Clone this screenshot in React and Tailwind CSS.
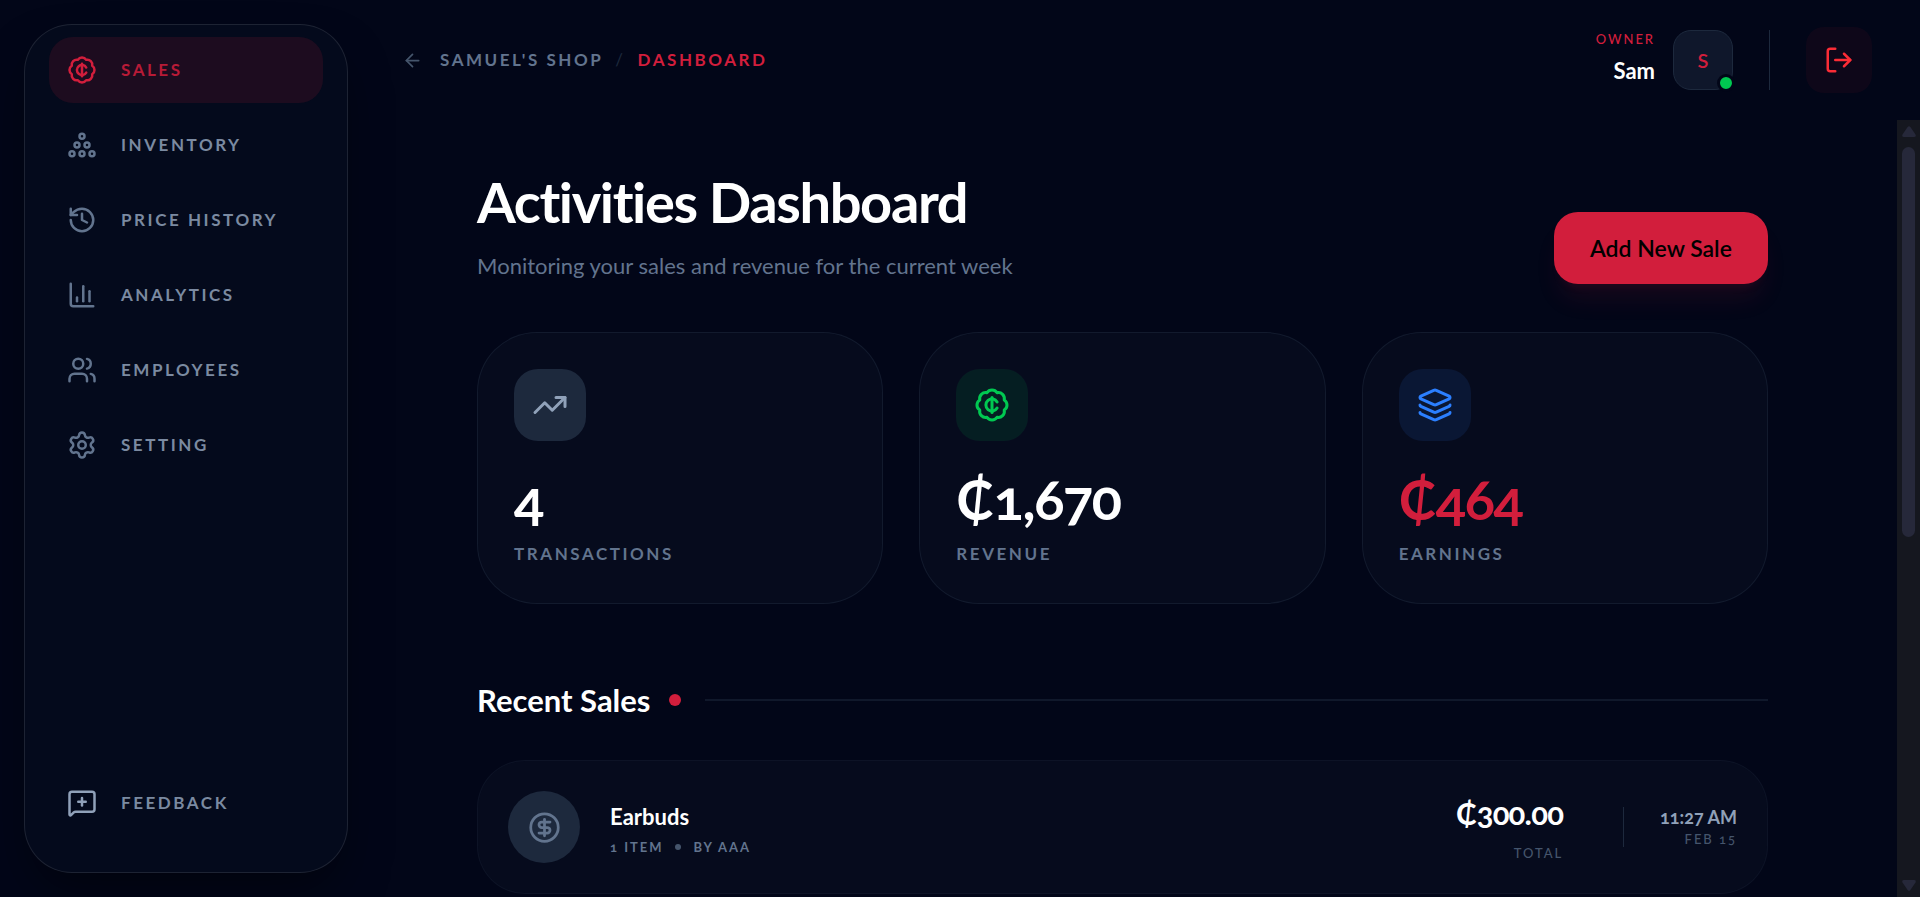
import React, { useState } from 'react';
import {
  ArrowLeft,
  BadgeCent,
  ChartColumn,
  CircleDollarSign,
  History,
  Layers,
  LogOut,
  MessageSquarePlus,
  Settings,
  TrendingUp,
  Users
} from 'lucide-react';

// Pyramid of six rings
const PileIcon = ({ size = 24 }) => (
  <svg width={size} height={size} viewBox="0 0 24 24" fill="none" stroke="currentColor" strokeWidth="2" aria-hidden="true">
    <circle cx="12" cy="5" r="2" />
    <circle cx="8" cy="12" r="2" />
    <circle cx="16" cy="12" r="2" />
    <circle cx="4" cy="19" r="2" />
    <circle cx="12" cy="19" r="2" />
    <circle cx="20" cy="19" r="2" />
  </svg>
);

const NAV_ITEMS = [
  { label: 'Sales', icon: BadgeCent },
  { label: 'Inventory', icon: PileIcon },
  { label: 'Price History', icon: History },
  { label: 'Analytics', icon: ChartColumn },
  { label: 'Employees', icon: Users },
  { label: 'Setting', icon: Settings }
];

const STATS = [
  { label: 'Transactions', value: '4', icon: TrendingUp, box: 'bg-slate-800 text-slate-400', text: 'text-white' },
  { label: 'Revenue', value: '₵1,670', icon: BadgeCent, box: 'bg-green-500/10 text-green-500', text: 'text-white' },
  { label: 'Earnings', value: '₵464', icon: Layers, box: 'bg-blue-500/10 text-blue-500', text: 'text-[#d21e3c]' }
];

const SALES = [
  { id: 1, name: 'Earbuds', items: '1 Item', seller: 'By AAA', total: '₵300.00', time: '11:27 AM', date: 'Feb 15' }
];

const NavItem = ({ label, icon: Icon, active, iconColor = 'text-slate-500', onClick }) => (
  <a
    href="#"
    onClick={onClick}
    className={`flex items-center gap-6 p-[18px] rounded-3xl transition-colors ${
      active ? 'bg-[#d21e3c]/12 text-[#d21e3c]' : 'text-slate-400 hover:bg-white/5'
    }`}
  >
    <span className={active ? '' : iconColor}>
      <Icon size={30} />
    </span>
    <span className="text-[17px] leading-6 font-bold uppercase tracking-[0.15em] opacity-85">{label}</span>
  </a>
);

const Sidebar = () => {
  const [current, setCurrent] = useState('Sales');

  return (
    <aside className="shrink-0 py-6 pl-6">
      <div className="flex flex-col justify-between h-full w-[324px] px-6 pt-3 pb-9 rounded-[48px] border border-white/10 bg-[#040a1c] shadow-2xl shadow-black/50">
        <nav className="flex flex-col gap-[9px]">
          {NAV_ITEMS.map((item) => (
            <NavItem
              key={item.label}
              label={item.label}
              icon={item.icon}
              active={current === item.label}
              onClick={() => setCurrent(item.label)}
            />
          ))}
        </nav>
        <NavItem label="Feedback" icon={MessageSquarePlus} iconColor="text-slate-400" />
      </div>
    </aside>
  );
};

const Header = () => (
  <header className="shrink-0 h-[120px] px-12 flex items-center justify-between">
    <div className="flex items-center gap-3">
      <button aria-label="Go back" className="w-8 h-8 flex items-center justify-center text-slate-600">
        <ArrowLeft size={21} />
      </button>
      <div className="flex items-center gap-3 text-[17px] leading-6 font-bold uppercase tracking-[0.15em]">
        <a href="#" className="text-slate-500">Samuel's Shop</a>
        <span className="font-normal text-slate-800">/</span>
        <span className="text-[#d21e3c]">Dashboard</span>
      </div>
    </div>

    <div className="flex items-center gap-9">
      <div className="flex items-center gap-[18px]">
        <div className="pb-1.5 text-right">
          <p className="text-[13px] leading-5 font-medium uppercase tracking-[0.15em] text-[#d21e3c]">Owner</p>
          <p className="mt-2 text-[22px] leading-7 font-bold text-white">Sam</p>
        </div>
        <div className="relative w-[60px] h-[60px] flex items-center justify-center rounded-[18px] border border-slate-800 bg-slate-900 text-xl font-semibold text-[#d21e3c]">
          S
          <span className="absolute -right-[3px] -bottom-[3px] w-[18px] h-[18px] rounded-full border-3 border-slate-950 bg-green-500"></span>
        </div>
      </div>
      <div className="w-px h-[60px] bg-slate-800"></div>
      <button aria-label="Log out" className="w-[66px] h-[66px] flex items-center justify-center rounded-[18px] bg-red-500/5 text-red-500">
        <LogOut size={30} />
      </button>
    </div>
  </header>
);

const StatCard = ({ label, value, icon: Icon, box, text }) => (
  <div className="p-9 rounded-[60px] border border-slate-800/50 bg-[#060b1d]">
    <div className={`w-[72px] h-[72px] flex items-center justify-center rounded-3xl ${box}`}>
      <Icon size={36} />
    </div>
    <p className={`mt-7 text-[56px] leading-[60px] font-bold tracking-tight oldstyle-nums ${text}`}>{value}</p>
    <p className="mt-3 text-[17px] leading-[26px] font-bold uppercase tracking-[0.15em] text-slate-500">{label}</p>
  </div>
);

const SaleRow = ({ sale }) => (
  <li className="flex items-center justify-between p-[30px] rounded-[48px] border border-slate-800/30 bg-[#060b1d]">
    <div className="flex items-center gap-[30px]">
      <div className="w-[72px] h-[72px] flex items-center justify-center rounded-full bg-slate-800 text-slate-500">
        <CircleDollarSign size={33} />
      </div>
      <div className="pt-1">
        <p className="text-[22px] leading-8 font-bold text-white">{sale.name}</p>
        <div className="mt-1 flex items-center gap-3 text-[13px] leading-5 font-bold uppercase tracking-[0.15em] text-slate-500 oldstyle-nums">
          <span>{sale.items}</span>
          <span className="w-1.5 h-1.5 rounded-full bg-slate-600"></span>
          <span>{sale.seller}</span>
        </div>
      </div>
    </div>
    <div className="flex items-center gap-9 text-right oldstyle-nums">
      <div className="pt-1 pr-6">
        <p className="text-[31px] leading-9 font-bold tracking-tight text-white">{sale.total}</p>
        <p className="mt-3 text-[13px] leading-5 font-medium uppercase tracking-[0.15em] text-slate-600">Total</p>
      </div>
      <div className="w-px h-10 bg-slate-800"></div>
      <div>
        <p className="text-lg leading-6 font-bold text-slate-400">{sale.time}</p>
        <p className="text-[13px] leading-5 font-medium uppercase tracking-[0.15em] text-slate-600">{sale.date}</p>
      </div>
    </div>
  </li>
);

// Slim decorative rail beside the scrolling area
const ScrollRail = () => (
  <div aria-hidden="true" className="shrink-0 w-[23px] flex flex-col items-center justify-between py-1.5 bg-[#15171f]">
    <svg width="14" height="11" viewBox="0 0 14 11" fill="#26283a">
      <path d="M5.6 1 .5 8.6Q-.5 11 2 11H12Q14.5 11 13.5 8.6L8.4 1Q7-.7 5.6 1Z" />
    </svg>
    <div className="flex-1 w-[13px] py-2.5">
      <div className="h-[54%] rounded-full bg-[#26283a]"></div>
    </div>
    <svg width="14" height="11" viewBox="0 0 14 11" fill="#26283a">
      <path d="M5.6 10 .5 2.4Q-.5 0 2 0H12Q14.5 0 13.5 2.4L8.4 10Q7 11.7 5.6 10Z" />
    </svg>
  </div>
);

const App = () => {
  return (
    <div className="flex h-screen overflow-hidden bg-slate-950 font-['Lato','Noto_Sans',sans-serif]">
      <Sidebar />
      <div className="flex-1 min-w-0 flex flex-col">
        <Header />
        <div className="flex-1 min-h-0 flex">
          <main className="flex-1 min-w-0 overflow-hidden">
            <div className="w-10/12 mx-auto pt-12">
              {/* Page title */}
              <div className="flex items-end justify-between">
                <div>
                  <h1 className="text-[56px] leading-[68px] font-bold tracking-tight text-white">Activities Dashboard</h1>
                  <p className="mt-3 text-[22px] leading-9 text-slate-500">Monitoring your sales and revenue for the current week</p>
                </div>
                <button className="h-[72px] px-9 rounded-3xl bg-[#d21e3c] text-[23px] font-semibold text-black shadow-xl shadow-[#d21e3c]/10">
                  Add New Sale
                </button>
              </div>

              {/* Stats */}
              <div className="mt-12 grid grid-cols-3 gap-9">
                {STATS.map((stat) => (
                  <StatCard key={stat.label} {...stat} />
                ))}
              </div>

              {/* Recent sales */}
              <section className="mt-[72px]">
                <div className="flex items-center">
                  <h2 className="text-[31px] leading-12 font-bold text-white">Recent Sales</h2>
                  <span className="ml-[18px] w-3 h-3 rounded-full bg-[#d21e3c]"></span>
                  <div className="ml-6 flex-1 h-0.5 bg-slate-800/50"></div>
                </div>
                <ul className="mt-9 flex flex-col gap-[18px]">
                  {SALES.map((sale) => (
                    <SaleRow key={sale.id} sale={sale} />
                  ))}
                </ul>
              </section>
            </div>
          </main>
          <ScrollRail />
        </div>
      </div>
    </div>
  );
};

export default App;
